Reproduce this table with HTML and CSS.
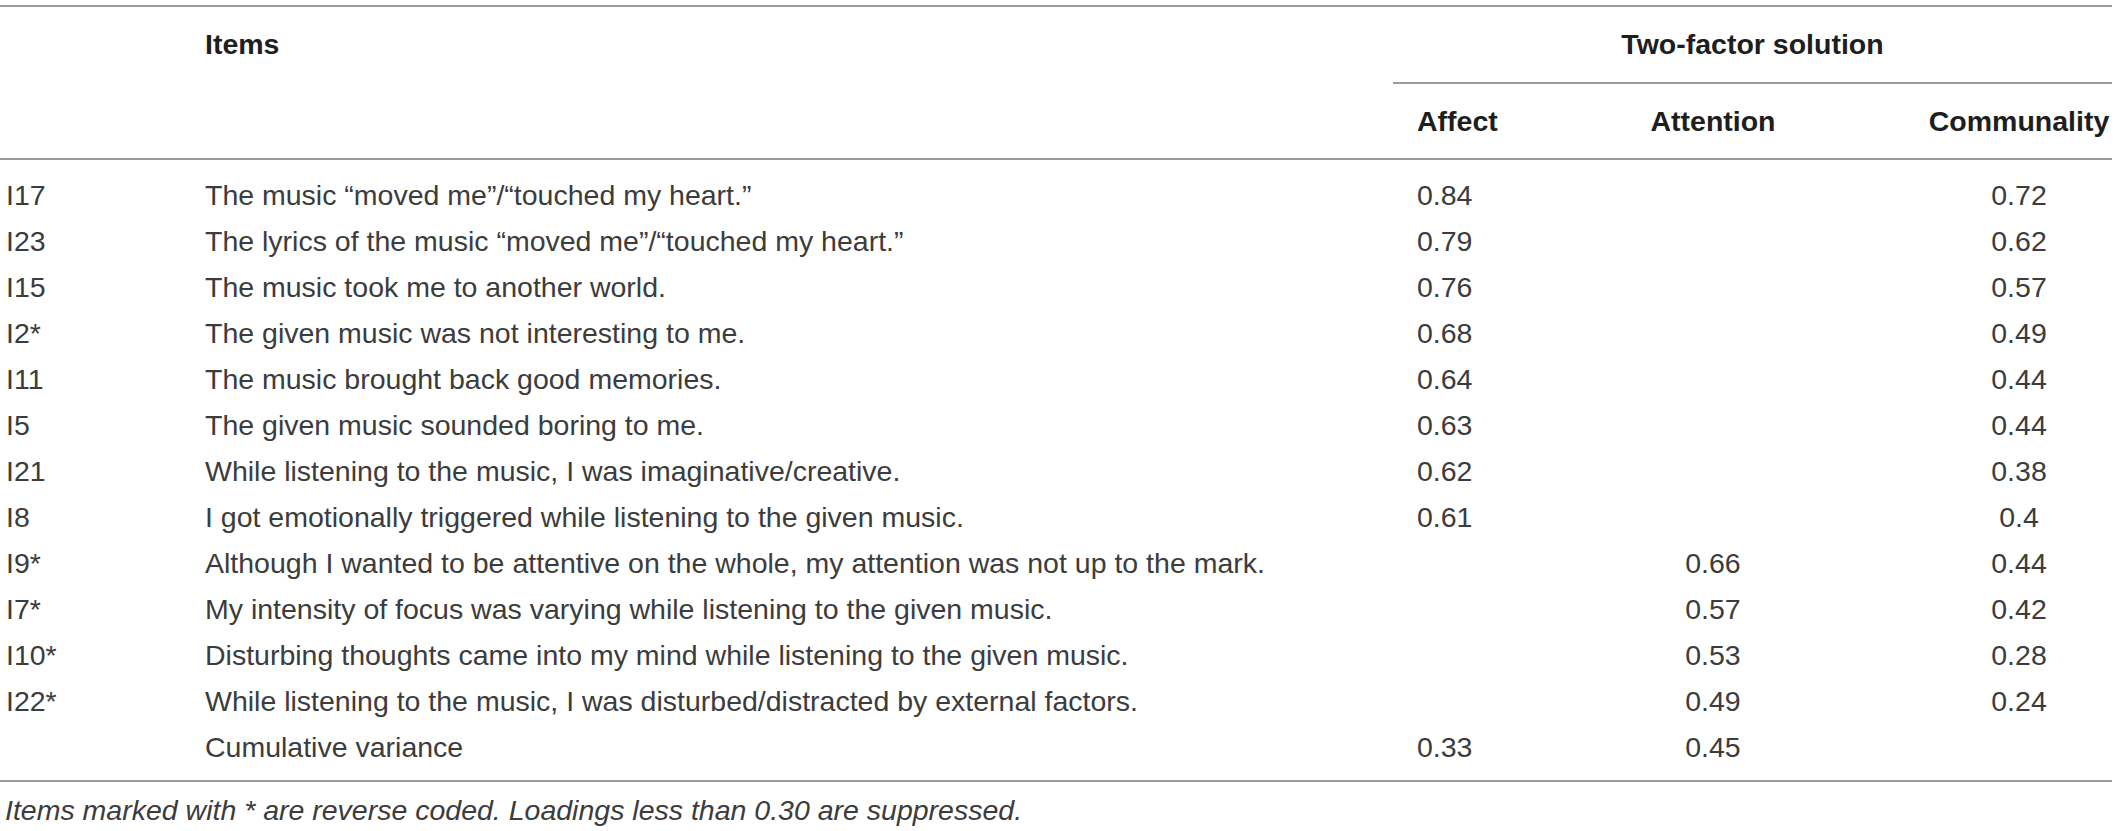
FILE: index.html
```html
<!DOCTYPE html>
<html lang="en">
<head>
<meta charset="utf-8">
<title>Two-factor solution</title>
<link rel="stylesheet" href="styles.css">
</head>
<body>
<div class="page">
<table class="tbl">
  <colgroup>
    <col class="c-id">
    <col class="c-item">
    <col class="c-affect">
    <col class="c-attn">
    <col class="c-comm">
  </colgroup>
  <thead>
    <tr class="h1">
      <th class="id span2" rowspan="2"></th>
      <th class="item span2 items-head" rowspan="2">Items</th>
      <th class="group" colspan="3">Two-factor solution</th>
    </tr>
    <tr class="h2">
      <th class="affect">Affect</th>
      <th class="ctr">Attention</th>
      <th class="ctr">Communality</th>
    </tr>
  </thead>
  <tbody>
    <tr><td class="id">I17</td><td class="item">The music “moved me”/“touched my heart.”</td><td class="affect">0.84</td><td class="ctr"></td><td class="ctr">0.72</td></tr>
    <tr><td class="id">I23</td><td class="item">The lyrics of the music “moved me”/“touched my heart.”</td><td class="affect">0.79</td><td class="ctr"></td><td class="ctr">0.62</td></tr>
    <tr><td class="id">I15</td><td class="item">The music took me to another world.</td><td class="affect">0.76</td><td class="ctr"></td><td class="ctr">0.57</td></tr>
    <tr><td class="id">I2*</td><td class="item">The given music was not interesting to me.</td><td class="affect">0.68</td><td class="ctr"></td><td class="ctr">0.49</td></tr>
    <tr><td class="id">I11</td><td class="item">The music brought back good memories.</td><td class="affect">0.64</td><td class="ctr"></td><td class="ctr">0.44</td></tr>
    <tr><td class="id">I5</td><td class="item">The given music sounded boring to me.</td><td class="affect">0.63</td><td class="ctr"></td><td class="ctr">0.44</td></tr>
    <tr><td class="id">I21</td><td class="item">While listening to the music, I was imaginative/creative.</td><td class="affect">0.62</td><td class="ctr"></td><td class="ctr">0.38</td></tr>
    <tr><td class="id">I8</td><td class="item">I got emotionally triggered while listening to the given music.</td><td class="affect">0.61</td><td class="ctr"></td><td class="ctr">0.4</td></tr>
    <tr><td class="id">I9*</td><td class="item">Although I wanted to be attentive on the whole, my attention was not up to the mark.</td><td class="affect"></td><td class="ctr">0.66</td><td class="ctr">0.44</td></tr>
    <tr><td class="id">I7*</td><td class="item">My intensity of focus was varying while listening to the given music.</td><td class="affect"></td><td class="ctr">0.57</td><td class="ctr">0.42</td></tr>
    <tr><td class="id">I10*</td><td class="item">Disturbing thoughts came into my mind while listening to the given music.</td><td class="affect"></td><td class="ctr">0.53</td><td class="ctr">0.28</td></tr>
    <tr><td class="id">I22*</td><td class="item">While listening to the music, I was disturbed/distracted by external factors.</td><td class="affect"></td><td class="ctr">0.49</td><td class="ctr">0.24</td></tr>
    <tr><td class="id"></td><td class="item">Cumulative variance</td><td class="affect">0.33</td><td class="ctr">0.45</td><td class="ctr"></td></tr>
  </tbody>
</table>
<p class="note">Items marked with * are reverse coded. Loadings less than 0.30 are suppressed.</p>
</div>
</body>
</html>
```

FILE: styles.css
```css
html, body {
  margin: 0;
  padding: 0;
  background: #ffffff;
}

.page {
  width: 2112px;
  padding-top: 5px;
  font-family: "Liberation Sans", Arial, sans-serif;
  font-size: 28.5px;
  color: #3c3c3c;
}

.tbl {
  width: 2112px;
  border-collapse: collapse;
  table-layout: fixed;
  border-top: 2px solid #9a9a9a;
  border-bottom: 2px solid #9a9a9a;
}

.c-id { width: 199px; }
.c-item { width: 1194px; }
.c-affect { width: 107px; }
.c-attn { width: 426px; }
.c-comm { width: 186px; }

.tbl th,
.tbl td {
  padding: 0;
  white-space: nowrap;
  text-align: left;
  vertical-align: middle;
}

.tbl th {
  font-weight: bold;
  color: #1e1e1e;
}

.tbl .id { padding-left: 6px; }
.tbl .item { padding-left: 6px; }
.tbl .affect { padding-left: 24px; }
.tbl .ctr { text-align: center; }

.h1 th {
  height: 75px;
}

.h1 .group {
  text-align: center;
  border-bottom: 2px solid #9a9a9a;
}

.tbl th.span2 {
  border-bottom: 2px solid #9a9a9a;
}

.tbl th.items-head {
  vertical-align: top;
  padding-top: 19px;
  line-height: 36px;
}

.h2 th {
  height: 74px;
  border-bottom: 2px solid #9a9a9a;
}

.tbl tbody td {
  height: 46px;
  line-height: 46px;
}

.tbl tbody tr:first-child td {
  padding-top: 12px;
}

.tbl tbody tr:last-child td {
  padding-bottom: 10px;
}

.note {
  margin: 0;
  padding: 10px 0 0 5px;
  line-height: 36px;
  font-style: italic;
  color: #3c3c3c;
}
```
